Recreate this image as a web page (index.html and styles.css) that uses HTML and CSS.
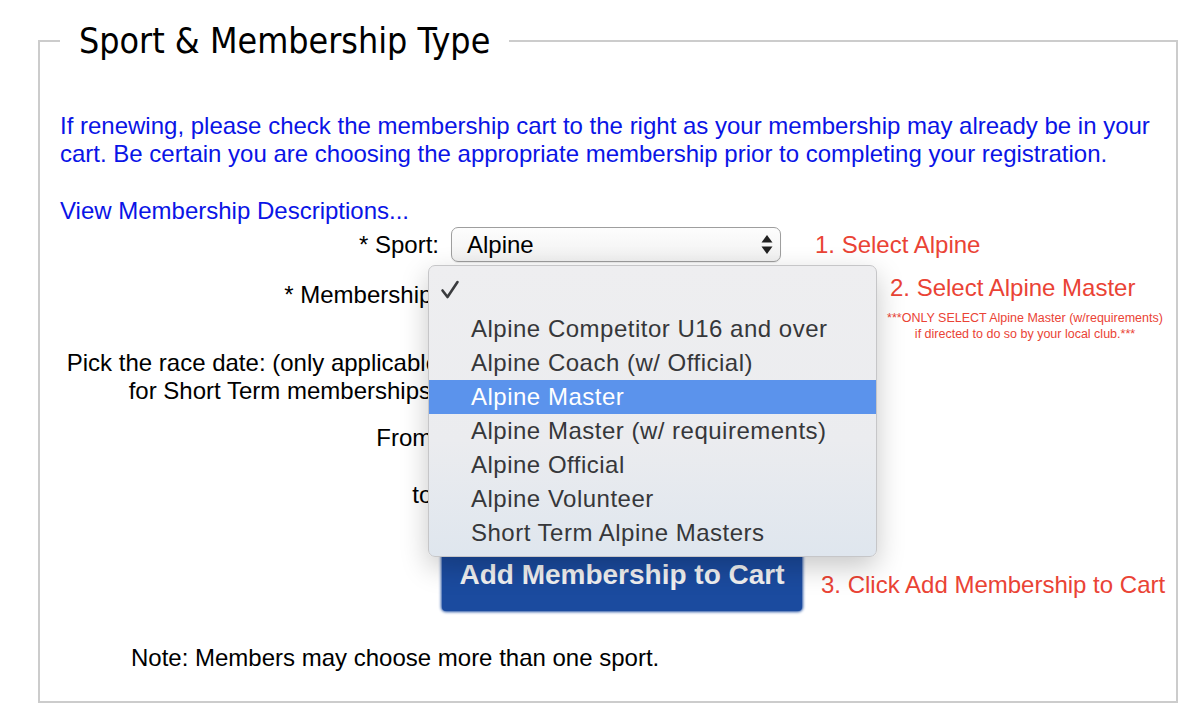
FILE: index.html
```html
<!DOCTYPE html>
<html lang="en">
<head>
    <meta charset="UTF-8">
    <meta name="viewport" content="width=device-width, initial-scale=1.0">
    <title>Sport &amp; Membership Type</title>
    <link rel="stylesheet" href="styles.css">
</head>
<body>

<fieldset class="box">
    <legend>Sport &amp; Membership Type</legend>

    <p class="notice">If renewing, please check the membership cart to the right as your membership may already be in your cart. Be certain you are choosing the appropriate membership prior to completing your registration.</p>
    <a class="desc-link" href="#">View Membership Descriptions...</a>

    <div class="row row-sport">
        <label class="lbl">* Sport:</label>
        <div class="select sport-select">
            <span>Alpine</span>
            <svg class="arrows" width="12" height="21" viewBox="0 0 12 21">
                <path d="M6 1 L11.5 8.5 H0.5 Z" fill="#222"/>
                <path d="M6 20 L11.5 12.5 H0.5 Z" fill="#222"/>
            </svg>
        </div>
        <span class="hint hint-1">1. Select Alpine</span>
    </div>

    <div class="row row-type">
        <label class="lbl">* Membership:</label>
        <div class="select type-select"><span></span></div>
        <div class="hint hint-2">
            <div class="hint-big">2. Select Alpine Master</div>
            <div class="hint-small">***ONLY SELECT Alpine Master (w/requirements)<br>if directed to do so by your local club.***</div>
        </div>
    </div>

    <div class="row row-race">
        <label class="lbl">Pick the race date: (only applicable for Short Term memberships)</label>
    </div>

    <div class="row row-from">
        <label class="lbl">From:</label>
        <input class="date" type="text">
    </div>

    <div class="row row-to">
        <label class="lbl">to:</label>
        <input class="date" type="text">
    </div>

    <div class="row row-btn">
        <span class="lbl"></span>
        <button class="add-btn">Add Membership to Cart</button>
        <span class="hint hint-3">3. Click Add Membership to Cart</span>
    </div>

    <p class="note">Note: Members may choose more than one sport.</p>
</fieldset>

<!-- open membership dropdown -->
<ul class="menu">
    <li class="checked">
        <svg class="tick" width="20" height="20" viewBox="0 0 20 20">
            <path d="M2.5 10.5 L7.5 17 L17.5 2" fill="none" stroke="#3a3b3e" stroke-width="2.6" stroke-linecap="round" stroke-linejoin="round"/>
        </svg>
    </li>
    <li>Alpine Competitor U16 and over</li>
    <li>Alpine Coach (w/ Official)</li>
    <li class="active">Alpine Master</li>
    <li>Alpine Master (w/ requirements)</li>
    <li>Alpine Official</li>
    <li>Alpine Volunteer</li>
    <li>Short Term Alpine Masters</li>
</ul>

</body>
</html>
```

FILE: styles.css
```css
body {
    margin: 0;
    font-family: "Liberation Sans", Arial, sans-serif;
    font-size: 24px;
    color: #000;
    background: #fff;
}

/* Outer box */
.box {
    position: relative;
    margin: 22px 10px 0 38px;
    padding: 0 20px 29px 20px;
    border: 2px solid #ccc;
    min-width: 0;
}

.box legend {
    padding: 0 19px;
    font-family: "DejaVu Sans Condensed", "DejaVu Sans", sans-serif;
    font-size: 35.5px;
    line-height: 38px;
}

.notice {
    margin: 52px 0 0 0;
    line-height: 28px;
    color: #0a14e6;
}

.desc-link {
    display: block;
    margin-top: 29px;
    line-height: 28px;
    color: #0a14e6;
    text-decoration: none;
}

/* Form rows */
.row {
    display: flex;
    align-items: flex-start;
}

.row > * {
    flex: none;
}

.lbl {
    width: 379px;
    margin-right: 12px;
    text-align: right;
    line-height: 24px;
}

.hint {
    color: #ea4335;
    white-space: nowrap;
}

.select {
    box-sizing: border-box;
    display: flex;
    align-items: center;
    justify-content: space-between;
    height: 35px;
    padding: 0 7px 0 15px;
    border: 1px solid #9e9e9e;
    border-radius: 7px;
    background: linear-gradient(#fdfdfd, #f1f1f1);
    box-shadow: 0 1px 1px rgba(0, 0, 0, 0.08);
}

.row-sport {
    margin-top: 2px;
    align-items: center;
}
.sport-select {
    width: 330px;
}
.hint-1 {
    margin-left: 34px;
}

.row-type {
    margin-top: 14px;
}
.row-type .lbl {
    margin-top: 7px;
}
.type-select {
    width: 420px;
    margin-top: 2px;
}
.hint-2 {
    margin-left: 10px;
    width: 288px;
}
.hint-big {
    padding-left: 9px;
    line-height: 24px;
}
.hint-small {
    margin-top: 10px;
    font-size: 12.5px;
    line-height: 16px;
    text-align: center;
}

.row-race {
    margin-top: 7px;
}
.row-race .lbl {
    line-height: 28px;
}

.row-from {
    margin-top: 21px;
}
.row-to {
    margin-top: 29px;
}
.date {
    width: 200px;
    height: 24px;
    border: 1px solid #aaa;
}

.row-btn {
    margin-top: 35px;
    align-items: center;
}
.row-btn .lbl {
    margin-right: 3px;
}
.add-btn {
    width: 360px;
    height: 65px;
    padding: 0 0 8px 0;
    border: none;
    border-radius: 4px;
    background: #1b4b9f;
    box-shadow: 0 0 3px 1px #1b4b9f;
    color: #f2f2f2;
    font-family: "Liberation Sans", Arial, sans-serif;
    font-weight: bold;
    font-size: 28px;
}
.hint-3 {
    margin-left: 19px;
    padding-top: 12px;
}

.note {
    margin: 33px 0 0 71px;
    line-height: 28px;
}

/* Open dropdown menu */
.menu {
    position: absolute;
    left: 428px;
    top: 265px;
    box-sizing: border-box;
    width: 449px;
    height: 292px;
    margin: 0;
    padding: 8px 0 7px 0;
    list-style: none;
    border: 1px solid #c6c6c8;
    border-radius: 7px;
    background: linear-gradient(#eeeef0, #ebecef 60%, #dfe6ee);
    box-shadow: 0 10px 28px rgba(0, 0, 0, 0.22);
    font-family: "Liberation Sans", Arial, sans-serif;
    font-size: 24px;
    letter-spacing: 0.5px;
    color: #36373a;
}

.menu li {
    height: 34px;
    line-height: 34px;
    padding-left: 42px;
    position: relative;
}

.menu li.checked {
    margin-bottom: 4px;
}

.menu .tick {
    position: absolute;
    left: 11px;
    top: 6px;
}

.menu li.active {
    background: #5b93ec;
    color: #fff;
}
```
